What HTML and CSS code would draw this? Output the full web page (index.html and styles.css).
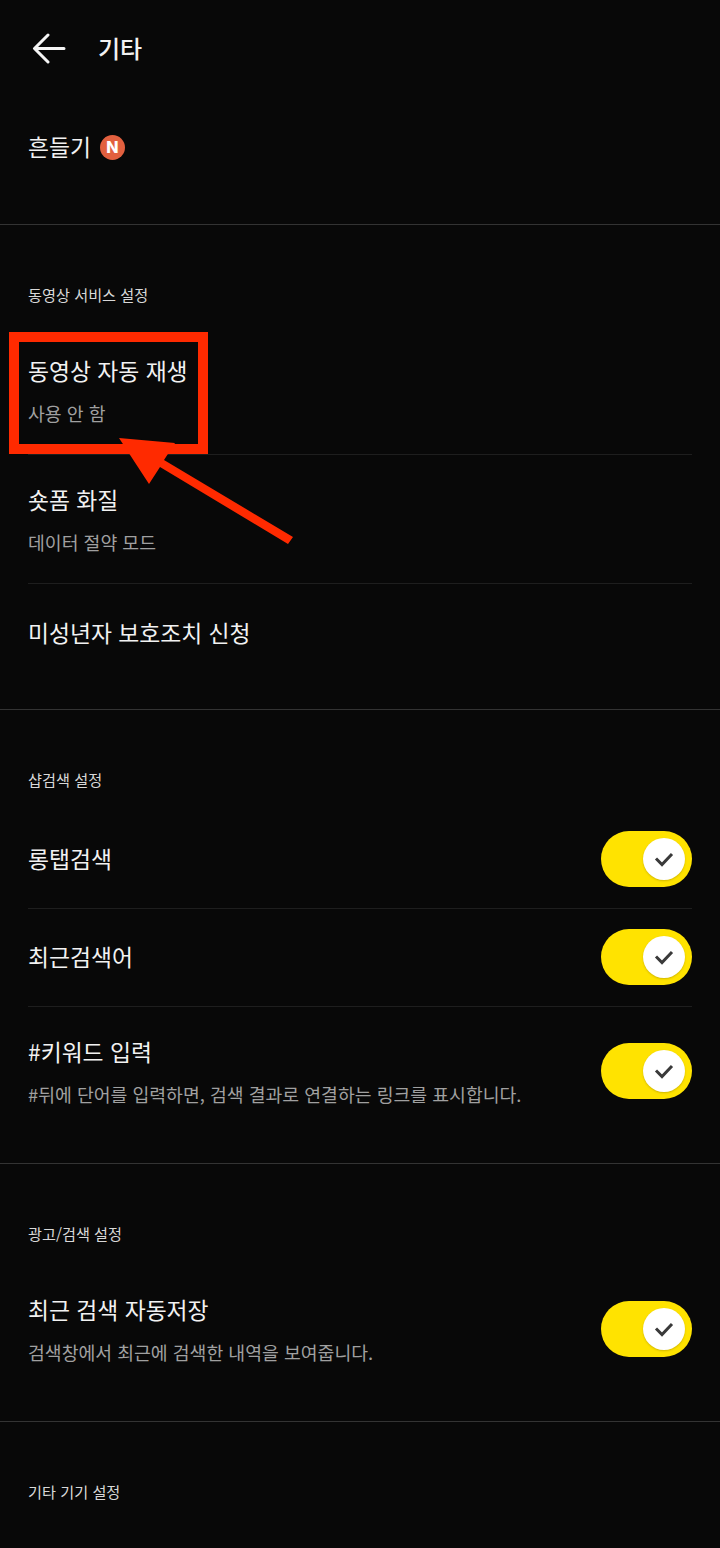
FILE: index.html
```html
<!DOCTYPE html>
<html lang="ko">
<head>
  <meta name="viewport" content="width=device-width, initial-scale=1.0">
  <link rel="stylesheet" href="styles.css">
</head>
<body>
  <div class="stage">
    <header class="topbar">
      <svg class="back-icon" viewBox="0 0 34 32" width="34" height="32">
        <path d="M32 16.5H3M16 3L2.5 16.5 16 30" fill="none" stroke="#f5f5f5" stroke-width="3" stroke-linecap="round" stroke-linejoin="round"/>
      </svg>
      <h1 class="topbar-title">기타</h1>
    </header>

    <section class="group group-first">
      <div class="row row-shake">
        <span class="row-title">흔들기</span>
        <span class="new-badge">N</span>
      </div>
    </section>

    <section class="group group-video">
      <h2 class="group-label">동영상 서비스 설정</h2>
      <div class="row row-sub">
        <div class="row-text">
          <div class="row-title">동영상 자동 재생</div>
          <div class="row-desc">사용 안 함</div>
        </div>
      </div>
      <div class="row row-sub">
        <div class="row-text">
          <div class="row-title">숏폼 화질</div>
          <div class="row-desc">데이터 절약 모드</div>
        </div>
      </div>
      <div class="row row-plain">
        <div class="row-title">미성년자 보호조치 신청</div>
      </div>
    </section>

    <section class="group">
      <h2 class="group-label">샵검색 설정</h2>
      <div class="row row-toggle">
        <div class="row-title">롱탭검색</div>
        <div class="toggle"><div class="knob"><svg viewBox="0 0 20 16" width="20" height="16"><path d="M2 7.5l6 6L18 3" fill="none" stroke="#3a3a3a" stroke-width="3"/></svg></div></div>
      </div>
      <div class="row row-toggle">
        <div class="row-title">최근검색어</div>
        <div class="toggle"><div class="knob"><svg viewBox="0 0 20 16" width="20" height="16"><path d="M2 7.5l6 6L18 3" fill="none" stroke="#3a3a3a" stroke-width="3"/></svg></div></div>
      </div>
      <div class="row row-toggle-sub">
        <div class="row-text">
          <div class="row-title">#키워드 입력</div>
          <div class="row-desc">#뒤에 단어를 입력하면, 검색 결과로 연결하는 링크를 표시합니다.</div>
        </div>
        <div class="toggle"><div class="knob"><svg viewBox="0 0 20 16" width="20" height="16"><path d="M2 7.5l6 6L18 3" fill="none" stroke="#3a3a3a" stroke-width="3"/></svg></div></div>
      </div>
    </section>

    <section class="group">
      <h2 class="group-label">광고/검색 설정</h2>
      <div class="row row-toggle-sub">
        <div class="row-text">
          <div class="row-title">최근 검색 자동저장</div>
          <div class="row-desc">검색창에서 최근에 검색한 내역을 보여줍니다.</div>
        </div>
        <div class="toggle"><div class="knob"><svg viewBox="0 0 20 16" width="20" height="16"><path d="M2 7.5l6 6L18 3" fill="none" stroke="#3a3a3a" stroke-width="3"/></svg></div></div>
      </div>
    </section>

    <section class="group group-end">
      <h2 class="group-label">기타 기기 설정</h2>
    </section>

    <!-- red highlight drawn over the screenshot -->
    <div class="mark-box"></div>
    <svg class="mark-arrow" viewBox="0 0 720 1548" width="720" height="1548">
      <polygon points="119,438 175,443 164,460 293,537 288,544 160,467 149,484" fill="#ff2a00"/>
    </svg>
  </div>
</body>
</html>
```

FILE: styles.css
```css
* {
  margin: 0;
  padding: 0;
  box-sizing: border-box;
}

body {
  background: #080808;
  font-family: 'Noto Sans CJK KR', 'Noto Sans', sans-serif;
  overflow: hidden;
}

.stage {
  width: 720px;
  height: 1548px;
  position: relative;
  overflow: hidden;
  background: #080808;
  color: #f2f2f2;
}

.topbar {
  height: 96px;
  display: flex;
  align-items: center;
  padding-left: 32px;
}

.back-icon {
  margin-right: 32px;
}

.topbar-title {
  font-size: 24px;
  font-weight: 500;
  line-height: 32px;
}

.group {
  border-bottom: 1px solid #333;
  padding: 57px 28px 56px;
}

.group-first {
  height: 129px;
  padding-top: 28px;
  padding-bottom: 0;
}

.group-video {
  padding-bottom: 60px;
}

.group-end {
  border-bottom: none;
}

.group-label {
  font-size: 15.2px;
  font-weight: 400;
  line-height: 24px;
  margin-bottom: 20px;
  color: #d8d8d8;
}

.row {
  display: flex;
  align-items: center;
}

.row-shake {
  height: 46px;
  gap: 9px;
}

.row-title {
  font-size: 22.8px;
  line-height: 32px;
  color: #f2f2f2;
}

.row-desc {
  font-size: 18.3px;
  line-height: 26px;
  margin-top: 13px;
  color: #a0a0a0;
}

.row-sub {
  height: 129px;
  border-bottom: 1px solid #1e1e1e;
  padding-top: 29px;
  align-items: flex-start;
}

.row-plain {
  padding-top: 33px;
}

.row-toggle {
  height: 98px;
  padding-bottom: 1px;
  justify-content: space-between;
  border-bottom: 1px solid #1e1e1e;
}

.row-toggle-sub {
  justify-content: space-between;
  padding-top: 29px;
}

.row-toggle-sub .toggle {
  margin-bottom: 1px;
}

.new-badge {
  width: 25px;
  height: 25px;
  border-radius: 50%;
  background: #e2603f;
  color: #fff;
  font-family: 'Inter', sans-serif;
  font-size: 16px;
  font-weight: 800;
  line-height: 25px;
  text-align: center;
}

.toggle {
  width: 91px;
  height: 56px;
  border-radius: 28px;
  background: #ffe300;
  display: flex;
  align-items: center;
  justify-content: flex-end;
  padding-right: 7px;
  flex-shrink: 0;
}

.knob {
  width: 42px;
  height: 42px;
  border-radius: 50%;
  background: #fff;
  box-shadow: 0 1px 2px rgba(120, 100, 0, 0.35);
  display: flex;
  align-items: center;
  justify-content: center;
}

.mark-box {
  position: absolute;
  left: 9px;
  top: 332px;
  width: 199px;
  height: 122px;
  border: 10px solid #ff2a00;
}

.mark-arrow {
  position: absolute;
  left: 0;
  top: 0;
}
```
